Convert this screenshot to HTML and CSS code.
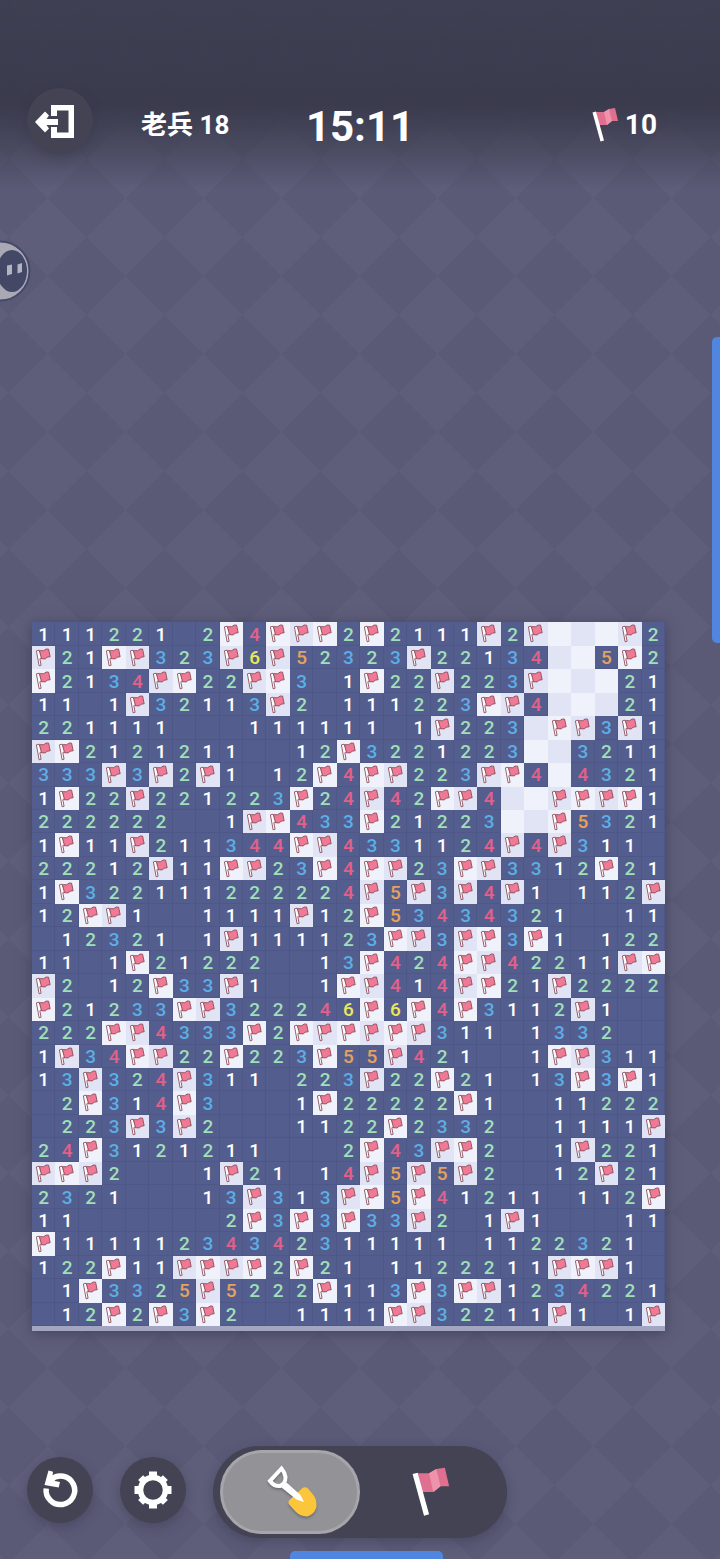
FILE: index.html
```
<!DOCTYPE html>
<html lang="zh-CN">
<head>
    <meta charset="UTF-8">
    <title>扫雷 - 老兵 18</title>
    <meta name="viewport" content="width=device-width, initial-scale=1.0">
    <link rel="stylesheet" href="styles.css">
</head>
<body>
    <svg class="sprite" aria-hidden="true">
        <symbol id="flag" viewBox="0 0 30 36">
            <path d="M6 5 L14 5 L19 2 L25 1 L28 14 L22 14 L17 18 L9 18 Z" fill="#e0708f"/>
            <path d="M14 5 L19 2 L22 14 L17 18 Z" fill="#ee93ab"/>
            <path d="M2.500 5.500 L6 4.500 L14 33.500 L10.500 34.500 Z" fill="#fff"/>
        </symbol>
        <symbol id="mine-flag" viewBox="0 0 24 24">
            <path d="M7.500 4.800 L12 4.800 L14.500 3.100 L17 3.200 L18.600 11 L15.500 11.500 L13.500 13.200 L9.300 13 Z" fill="#f07a95" stroke="#8a4a58" stroke-width="0.900"/>
            <path d="M4.500 5 L7.300 4.300 L9.500 12 L8 13 L9.300 19.700 L7.300 20.300 Z" fill="#fff" stroke="#8a4a58" stroke-width="0.900" stroke-linejoin="round"/>
        </symbol>
    </svg>

    <header class="topbar">
        <div class="topbar-left">
            <button class="round-btn back" aria-label="退出">
                <svg viewBox="0 0 66 66">
                    <path d="M24 28 V17 H47 V50 H24 V39 H30 V44.500 H41.500 V22.500 H30 V28 Z" fill="#fff"/>
                    <path d="M8 34 L18 23.500 L22 27.500 L19.500 31 H31 V37 H19.500 L22 40.500 L18 44.500 Z" fill="#fff"/>
                </svg>
            </button>
            <span class="level">老兵 18</span>
        </div>
        <div class="timer">15:11</div>
        <div class="mines-left">
            <svg class="mines-icon"><use href="#flag"/></svg>
            <span>10</span>
        </div>
    </header>

    <main class="game">
        <div class="board" id="board"></div>
    </main>

    <footer class="toolbar">
        <button class="round-btn" aria-label="重新开始">
            <svg viewBox="0 0 66 66">
                <path d="M24 22.500 A14.300 14.300 0 1 1 19.200 31.500" fill="none" stroke="#fff" stroke-width="5.500"/>
                <path d="M21.500 13.500 L26 14.700 L25.500 19 L28 24 L33 25 L31.700 30.500 L17.500 28 Z" fill="#fff"/>
            </svg>
        </button>
        <button class="round-btn" aria-label="设置">
            <svg viewBox="0 0 66 66">
                <circle cx="33" cy="33" r="12.500" fill="none" stroke="#fff" stroke-width="5.500"/>
                <g fill="#fff">
                    <path d="M29 14.500 H37 V20 H29 Z M29 46 H37 V51.500 H29 Z M14.500 29 H20 V37 H14.500 Z M46 29 H51.500 V37 H46 Z"/>
                    <path d="M29.500 15.500 H36.500 V20 H29.500 Z M29.500 46 H36.500 V50.500 H29.500 Z M15.500 29.500 H20 V36.500 H15.500 Z M46 29.500 H50.500 V36.500 H46 Z" transform="rotate(45 33 33)"/>
                </g>
            </svg>
        </button>
        <div class="mode-switch">
            <button class="mode active" id="dig" aria-label="挖开" aria-pressed="true">
                <svg class="shovel" viewBox="0 0 52 52">
                    <path d="M38 22.500 Q41 20 44 22.500 L49 28.500 Q53 33 52.500 41 Q50 49 43 50.500 Q36 50 32 46 L25.500 39 Q23 36 26 33.500 Z" fill="#fbc63c"/>
                    <path d="M17.500 2.500 L6 15 Q10 20.500 16 20 Q21.500 18 21.500 11 Q20.500 6 17.500 2.500 Z" fill="none" stroke="#fff" stroke-width="4"/>
                    <path d="M17.500 21.500 L22.500 16.500 L36.500 29 L40 36 L32.500 33.500 Z" fill="#fff"/>
                </svg>
            </button>
            <button class="mode" id="mark" aria-label="插旗" aria-pressed="false">
                <svg class="mode-flag"><use href="#flag"/></svg>
            </button>
        </div>
    </footer>

    <div class="assistant">
        <svg viewBox="0 0 62 62">
            <circle cx="31" cy="31" r="29.500" fill="#a9a9b5" stroke="#454868" stroke-width="2"/>
            <ellipse cx="43" cy="31" rx="15" ry="21" fill="#434866"/>
            <path d="M38 25.500 L43 24.500 V34 L38 35.500 Z M48.500 24.500 L53 23 V32 L48.500 33.500 Z" fill="#b4b4c0"/>
        </svg>
    </div>
    <div class="edge edge-right"></div>
    <div class="edge edge-bottom"></div>

    <script>
    // F = flag, # = covered, . = opened and empty
    var rows = [
        "111221.2F4FFF2F2111F2F###F2",
        "F21FF323F6F52323F22134##5F2",
        "F2134FF22FF3.1F22F223F###21",
        "11.1F32113F2.111223FF4###21",
        "221111...111111.1F223#FF3F1",
        "FF2121211..12F3221223##3211",
        "333F3F2F1.12F4FF223FF4#4321",
        "1F22F221223F24F42FF4##FFFF1",
        "222222..1FF433F21223##F5321",
        "1F11F211344FF4331124F4F311.",
        "22212F11FF23F4FF23FF3312F21",
        "1F322111222224F5F3F4F1.112F",
        "12FF1..1111F12F53434321..11",
        ".12321.1F111123FF3FF3F1.122",
        "11.1F21222..13F424FF42211FF",
        "F2.12F33F1..1FF414FF21F2222",
        "F21233FF322246F6F4F3112F1..",
        "222FF4333F2FFFFFF311.1332..",
        "1F34FF22F223F55F421..1FF311",
        "13F324F311.223F22F21.13F3F1",
        ".2F314F3...1F22222F1..11222",
        ".223F3F2...1122F2332..1111F",
        "24F3121211...2F43FF2..1F221",
        "FFF2...1F21.14F5F5F2..12F21",
        "2321...13F313FF5F41211.112F",
        "11......2F3F3F33F2.1F1...11",
        "F11111234342311111.1122321.",
        "122F11FFFF2F21.1122211FFF1.",
        ".1F3325F5222F113F3FF1234221",
        ".12F2F3F2..1111FF32211F1.1F"
    ];

    var board = document.getElementById("board");
    rows.forEach(function (row, y) {
        row.split("").forEach(function (value, x) {
            var cell = document.createElement("button");
            cell.className = "cell";
            cell.setAttribute("aria-label", (y + 1) + "-" + (x + 1) + " " + value);
            if (value === "F" || value === "#") {
                cell.classList.add((x + y) % 2 ? "covered-alt" : "covered");
                if (value === "F") {
                    cell.innerHTML = '<svg><use href="#mine-flag"/></svg>';
                }
            } else if (value !== ".") {
                cell.classList.add("n" + value);
                cell.textContent = value;
            }
            board.appendChild(cell);
        });
    });

    var modes = document.querySelectorAll(".mode");
    modes.forEach(function (mode) {
        mode.addEventListener("click", function () {
            modes.forEach(function (m) {
                m.classList.toggle("active", m === mode);
                m.setAttribute("aria-pressed", m === mode);
            });
        });
    });
    </script>
</body>
</html>
```

FILE: styles.css
```
* {
    box-sizing: border-box;
}

body {
    margin: 0;
    min-height: 100vh;
    display: flex;
    flex-direction: column;
    font-family: Roboto, "Noto Sans CJK SC", sans-serif;
    font-weight: bold;
    color: #fff;
    background-color: #5a5a77;
    background-image:
        linear-gradient(45deg, #5e5e7b 25%, transparent 25%, transparent 75%, #5e5e7b 75%),
        linear-gradient(135deg, #5e5e7b 25%, transparent 25%, transparent 75%, #5e5e7b 75%);
    background-size: 78px 78px;
    background-position: -30px 3px;
}

button {
    padding: 0;
    border: none;
    font: inherit;
    color: inherit;
    cursor: pointer;
}

svg {
    display: block;
}

.sprite {
    position: absolute;
    width: 0;
    height: 0;
}

/* Top bar */
.topbar {
    display: grid;
    grid-template-columns: 1fr auto 1fr;
    align-items: center;
    padding: 88px 27px 36px;
    background: linear-gradient(rgba(58, 58, 76, 0.85), rgba(56, 56, 74, 0.92) 55%, rgba(58, 58, 76, 0.5) 80%, transparent);
}

.topbar-left {
    display: flex;
    align-items: center;
    gap: 48px;
}

.round-btn {
    width: 66px;
    height: 66px;
    border-radius: 50%;
    background-color: #434354;
    box-shadow: 0 4px 12px rgba(50, 50, 70, 0.4);
}

.level {
    padding-top: 8px;
    font-size: 26px;
    line-height: 40px;
}

.timer {
    padding-top: 12px;
    font-size: 42px;
    line-height: 50px;
}

.mines-left {
    display: flex;
    justify-content: flex-end;
    align-items: center;
    gap: 5px;
    padding-top: 8px;
    padding-right: 36px;
    font-size: 28px;
    line-height: 40px;
}

.mines-icon {
    width: 30px;
    height: 36px;
}

/* Board */
.game {
    flex: 1;
    display: flex;
    flex-direction: column;
    justify-content: flex-end;
    padding: 32px 55px 115px 32px;
}

.board {
    display: grid;
    grid-template-columns: repeat(27, 1fr);
    border-bottom: 5px solid #a3a6c3;
    background-color: #535e8e;
    box-shadow: 0 2px 12px rgba(50, 50, 70, 0.6);
}

.cell {
    display: flex;
    align-items: center;
    justify-content: center;
    aspect-ratio: 1;
    min-width: 0;
    min-height: 0;
    background-color: #535e8e;
    box-shadow: inset -1px -1px 0 #4e5888;
    font-size: 19px;
    font-weight: 500;
    line-height: 23px;
}

.cell svg {
    width: 100%;
    height: 100%;
}

.covered {
    background-color: #f0f2fb;
    box-shadow: none;
}

.covered-alt {
    background-color: #e0e4f5;
    box-shadow: none;
}

.n1 { color: #fff; }
.n2 { color: #9fdfb9; }
.n3 { color: #5cafe6; }
.n4 { color: #e2608a; }
.n5 { color: #e5a25c; }
.n6 { color: #e9e75c; }

/* Bottom tools */
.toolbar {
    display: flex;
    align-items: center;
    gap: 27px;
    padding: 0 27px 21px;
}

.toolbar .round-btn {
    margin-bottom: 4px;
}

.mode-switch {
    display: flex;
    padding: 4px 7px;
    border-radius: 46px;
    background-color: #434354;
    box-shadow: 0 4px 12px rgba(50, 50, 70, 0.4);
}

.mode {
    display: flex;
    align-items: center;
    justify-content: center;
    width: 140px;
    height: 84px;
    border: 3px solid transparent;
    border-radius: 42px;
    background: none;
}

.mode.active {
    background-color: #929297;
    border-color: #a6a6aa;
}

.shovel {
    width: 52px;
    height: 52px;
    overflow: visible;
    filter: drop-shadow(0 2px 1px rgba(60, 60, 70, 0.4));
}

.mode-flag {
    width: 43px;
    height: 52px;
}

/* Floating bits at the screen edges */
.assistant {
    position: absolute;
    top: 240px;
    left: -31px;
    width: 62px;
    height: 62px;
}

.edge {
    position: fixed;
    background-color: #5086df;
}

.edge-right {
    top: 337px;
    right: 0;
    width: 8px;
    height: 306px;
    border-radius: 5px 0 0 5px;
}

.edge-bottom {
    left: 290px;
    bottom: 0;
    width: 153px;
    height: 8px;
    border-radius: 5px 5px 0 0;
}
```
